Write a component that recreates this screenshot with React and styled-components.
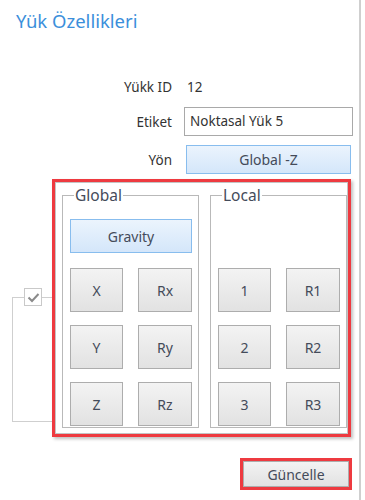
import React from 'react';
import styled, {createGlobalStyle} from 'styled-components';

const GlobalStyle = createGlobalStyle`
  body {
    margin: 0;
    background: #fff;
    font-family: "Noto Sans", "Open Sans", sans-serif;
  }
`;

const Panel = styled.div`
  position: relative;
  width: 361px;
  height: 500px;
  border-right: 2px solid #cfcfcf;
  background: #fff;
  box-sizing: border-box;
  overflow: hidden;
`;

const Title = styled.div`
  padding: 8px 0 0 16px;
  height: 40px;
  font-size: 18.5px;
  color: #3b8fdb;
`;

const Form = styled.div`
  display: grid;
  grid-template-columns: 172px 169px;
  column-gap: 12px;
  row-gap: 9px;
  margin-top: 28px;
  align-items: center;
`;

const Label = styled.div`
  text-align: right;
  font-size: 13.5px;
  color: #333;
`;

const Value = styled.div`
  font-size: 13.5px;
  color: #333;
  height: 22px;
  line-height: 22px;
  padding-left: 3px;
`;

const TextBox = styled.div`
  height: 29px;
  box-sizing: border-box;
  border: 1px solid #a9a9a9;
  padding: 0 5px;
  line-height: 27px;
  font-size: 13.5px;
  color: #333;
`;

const Button = styled.div`
  display: flex;
  align-items: center;
  justify-content: center;
  box-sizing: border-box;
  height: ${p => p.$h || 44}px;
  border: 1px solid ${p => (p.$blue ? '#88bdee' : '#adadad')};
  background: ${p =>
    p.$blue
      ? 'linear-gradient(#ebf4fd, #d4e6fa)'
      : 'linear-gradient(#f3f3f3, #e2e2e2)'};
  font-size: 14px;
  color: #444b5a;
`;

const DirButton = styled(Button)`
  width: 165px;
  margin-left: 2px;
`;

const BackGroup = styled.div`
  position: absolute;
  left: 12px;
  top: 297px;
  width: 60px;
  height: 125px;
  border: 1px solid #cfcfcf;
  box-sizing: border-box;
`;

const CheckBox = styled.div`
  position: absolute;
  left: 11px;
  top: -10px;
  width: 18px;
  height: 18px;
  box-sizing: border-box;
  border: 1px solid #c9c9c9;
  background: #fff;
  display: flex;
  align-items: center;
  justify-content: center;
`;

const Popup = styled.div`
  position: absolute;
  left: 52px;
  top: 179px;
  width: 299px;
  height: 258px;
  box-sizing: border-box;
  border: 3px solid #ee3a40;
  background: #fff;
  box-shadow: 2px 2px 3px rgba(0, 0, 0, 0.25);
`;

const PopupInner = styled.div`
  height: 100%;
  box-sizing: border-box;
  border: 1px solid #c4c4c4;
  display: grid;
  grid-template-columns: 136px 135px;
  column-gap: 12px;
  padding: 4px 0 5px 6px;
`;

const Group = styled.fieldset`
  margin: 0;
  padding: 8px 6px 0 7px;
  border: 1px solid #b9b9b9;
  display: grid;
  grid-template-columns: 53px 54px;
  column-gap: 15px;
  grid-auto-rows: 44px;
  row-gap: 13px;
  align-content: start;
`;

const Legend = styled.legend`
  font-size: 15.5px;
  color: #444b5a;
  padding: 0 1px;
  margin-left: 4px;
  line-height: 16px;
`;

const Gravity = styled(Button)`
  grid-column: 1 / 3;
  margin-top: 8px;
  margin-bottom: 1px;
  height: 34px;
`;

const Spacer = styled.div`
  grid-column: 1 / 3;
  margin-top: 8px;
  margin-bottom: 1px;
  height: 34px;
`;

const Footer = styled.div`
  position: absolute;
  left: 240px;
  top: 458px;
  width: 112px;
  height: 32px;
  box-sizing: border-box;
  border: 3px solid #ee3a40;
`;

const UpdateButton = styled(Button)`
  height: 100%;
  font-size: 14px;
`;

const GlobalButtons = ['X', 'Rx', 'Y', 'Ry', 'Z', 'Rz'];
const LocalButtons = ['1', 'R1', '2', 'R2', '3', 'R3'];

const App = () => {
    return (
        <Panel>
            <GlobalStyle/>
            <Title>Yük Özellikleri</Title>
            <Form>
                <Label>Yükk ID</Label>
                <Value>12</Value>
                <Label>Etiket</Label>
                <TextBox>Noktasal Yük 5</TextBox>
                <Label>Yön</Label>
                <DirButton $blue $h={29}>Global -Z</DirButton>
            </Form>

            <BackGroup>
                <CheckBox>
                    <svg width="13" height="11" viewBox="0 0 13 11">
                        <path d="M1.5 5.5 L5 9 L11.5 2" fill="none" stroke="#8a8a8a" strokeWidth="2"/>
                    </svg>
                </CheckBox>
            </BackGroup>

            <Popup>
                <PopupInner>
                    <Group>
                        <Legend>Global</Legend>
                        <Gravity $blue>Gravity</Gravity>
                        {GlobalButtons.map(b => <Button key={b}>{b}</Button>)}
                    </Group>
                    <Group>
                        <Legend>Local</Legend>
                        <Spacer/>
                        {LocalButtons.map(b => <Button key={b}>{b}</Button>)}
                    </Group>
                </PopupInner>
            </Popup>

            <Footer>
                <UpdateButton>Güncelle</UpdateButton>
            </Footer>
        </Panel>
    );
}

export default App;
